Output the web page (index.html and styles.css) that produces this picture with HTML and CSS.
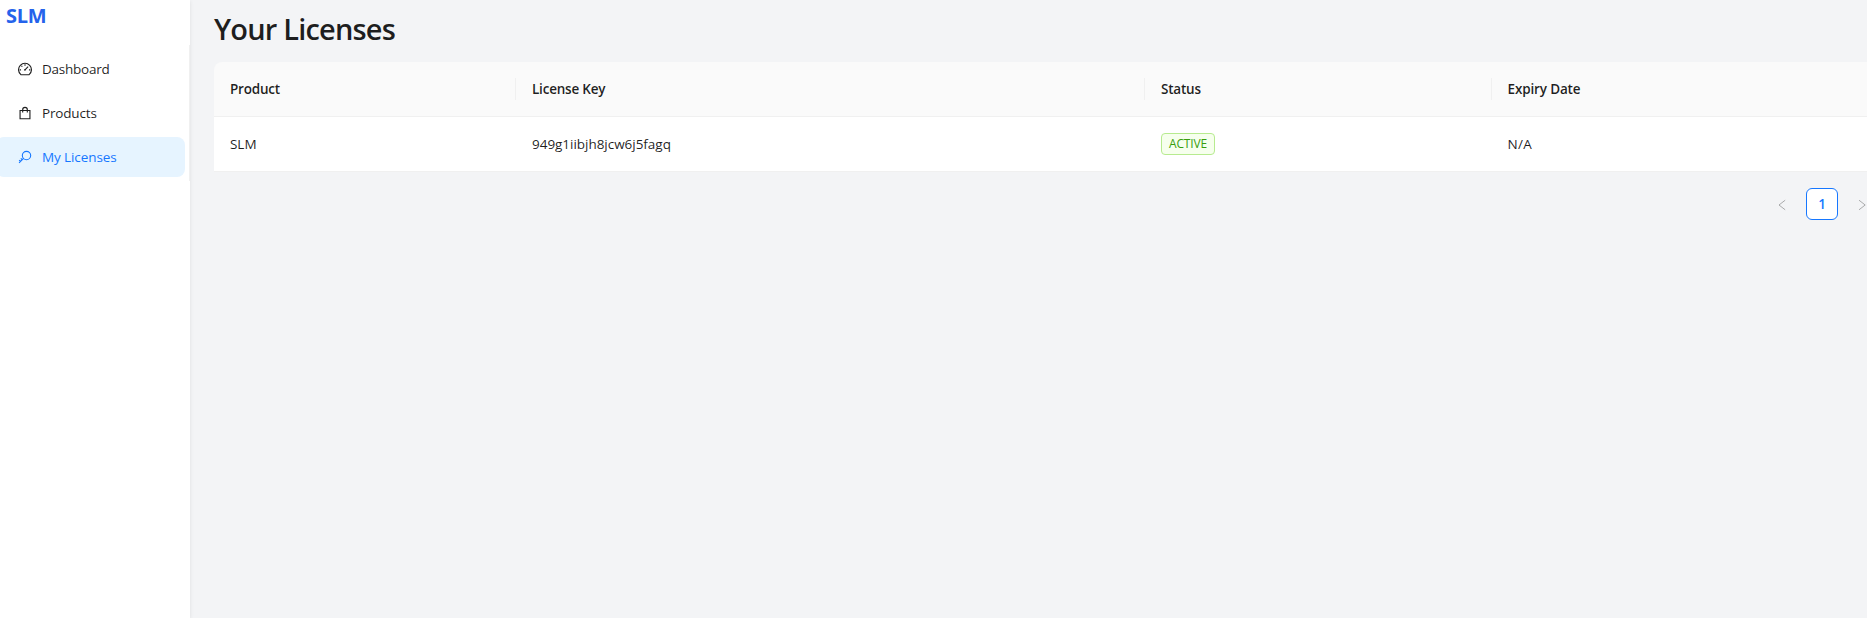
FILE: index.html
```html
<!DOCTYPE html>
<html lang="en">
<head>
<meta charset="utf-8">
<title>SLM</title>
<link rel="stylesheet" href="styles.css">
</head>
<body>
<div class="layout">
  <aside class="sider">
    <div class="logo">SLM</div>
    <ul class="menu">
      <li class="item"><svg class="icon" viewBox="64 64 896 896"><path d="M248 876a412 412 0 1 1 528 0zM512 214v84M286 312l54 54M174 568h84M766 568h84M526 546l186-186"/><circle cx="508" cy="564" r="24"/></svg><span class="label-dashboard">Dashboard</span></li>
      <li class="item"><svg class="icon" viewBox="64 64 896 896"><path d="M196 348h632v528H196zM364 472V296a148 148 0 0 1 296 0v176"/></svg><span class="label-products">Products</span></li>
      <li class="item selected"><svg class="icon" viewBox="64 64 896 896"><circle cx="608" cy="416" r="268"/><path d="M418 606L132 892M244 601l83 83M137 708l83 83"/></svg><span class="label-licenses">My Licenses</span></li>
    </ul>
  </aside>
  <main class="content">
    <h1 class="title">Your Licenses</h1>
    <div class="table">
      <div class="row head">
        <div class="cell">Product</div>
        <div class="cell">License Key</div>
        <div class="cell">Status</div>
        <div class="cell expiry">Expiry Date</div>
      </div>
      <div class="row">
        <div class="cell">SLM</div>
        <div class="cell">949g1iibjh8jcw6j5fagq</div>
        <div class="cell"><span class="tag">ACTIVE</span></div>
        <div class="cell expiry value">N/A</div>
      </div>
    </div>
    <div class="pagination">
      <span class="arrow"><svg class="chevron" viewBox="0 0 12 12"><path d="M9.2 1.2L3 6L9.2 10.8"/></svg></span>
      <span class="page">1</span>
      <span class="arrow"><svg class="chevron" viewBox="0 0 12 12"><path d="M3 1.2L9.2 6L3 10.8"/></svg></span>
    </div>
  </main>
</div>
</body>
</html>
```
FILE: styles.css
```css
* { box-sizing: border-box; }
body { margin: 0; overflow: hidden; background: #f3f4f6; color: rgba(0,0,0,.88); font: 13.5px/22px "Open Sans", "Noto Sans", sans-serif; }
.layout { display: flex; width: 1878px; height: 618px; }
.sider { width: 190px; flex: none; background: #fff; box-shadow: 0 1px 4px rgba(0,0,0,.09); }
.logo { height: 45px; padding: 2px 6px; color: #2563eb; font-size: 20px; line-height: 28px; font-weight: 700; letter-spacing: -.3px; }
.menu { list-style: none; margin: 0; height: 136px; border-right: 1px solid #f0f0f0; display: flex; flex-direction: column; gap: 4px; padding: 4px 4px 0 0; }
.item { height: 40px; flex: none; display: flex; align-items: center; gap: 10px; margin-left: -4px; padding-left: 22px; border-radius: 8px; }
.selected { background: #e6f4ff; color: #1677ff; }
.icon { width: 14px; height: 14px; fill: none; stroke: currentColor; stroke-width: 72; }
.label-dashboard { letter-spacing: -.23px; }
.label-products { letter-spacing: -.17px; }
.label-licenses { letter-spacing: -.1px; }
.content { width: 1664px; margin-left: 24px; flex: none; }
.title { margin: 0; height: 62px; padding-top: 10px; font-size: 29px; line-height: 38px; font-weight: 600; letter-spacing: -.82px; }
.row { display: grid; grid-template-columns: 302px 629px 347px 386px; height: 55px; background: #fff; border-bottom: 1px solid #f0f0f0; letter-spacing: -.03px; }
.head { background: #fafafa; font-weight: 600; border-radius: 8px 8px 0 0; letter-spacing: -.22px; }
.cell { display: flex; align-items: center; padding: 0 16px; }
.expiry { padding-left: 15.5px; letter-spacing: -.15px; }
.value { letter-spacing: .3px; }
.head .cell { background: linear-gradient(#f0f0f0, #f0f0f0) no-repeat right 50% / 1px 22px; }
.tag { height: 22px; border: 1px solid #b7eb8f; border-radius: 4px; background: #f6ffed; color: #389e0d; font-size: 12px; line-height: 20px; padding: 0 7px; letter-spacing: -.15px; }
.pagination { display: flex; justify-content: flex-end; gap: 8px; padding-top: 16px; }
.arrow, .page { width: 32px; height: 32px; display: flex; align-items: center; justify-content: center; }
.page { border: 1px solid #1677ff; border-radius: 6px; background: #fff; color: #1677ff; font-weight: 600; }
.chevron { width: 12px; height: 12px; margin-top: 2px; fill: none; stroke: rgba(0,0,0,.3); }
```
